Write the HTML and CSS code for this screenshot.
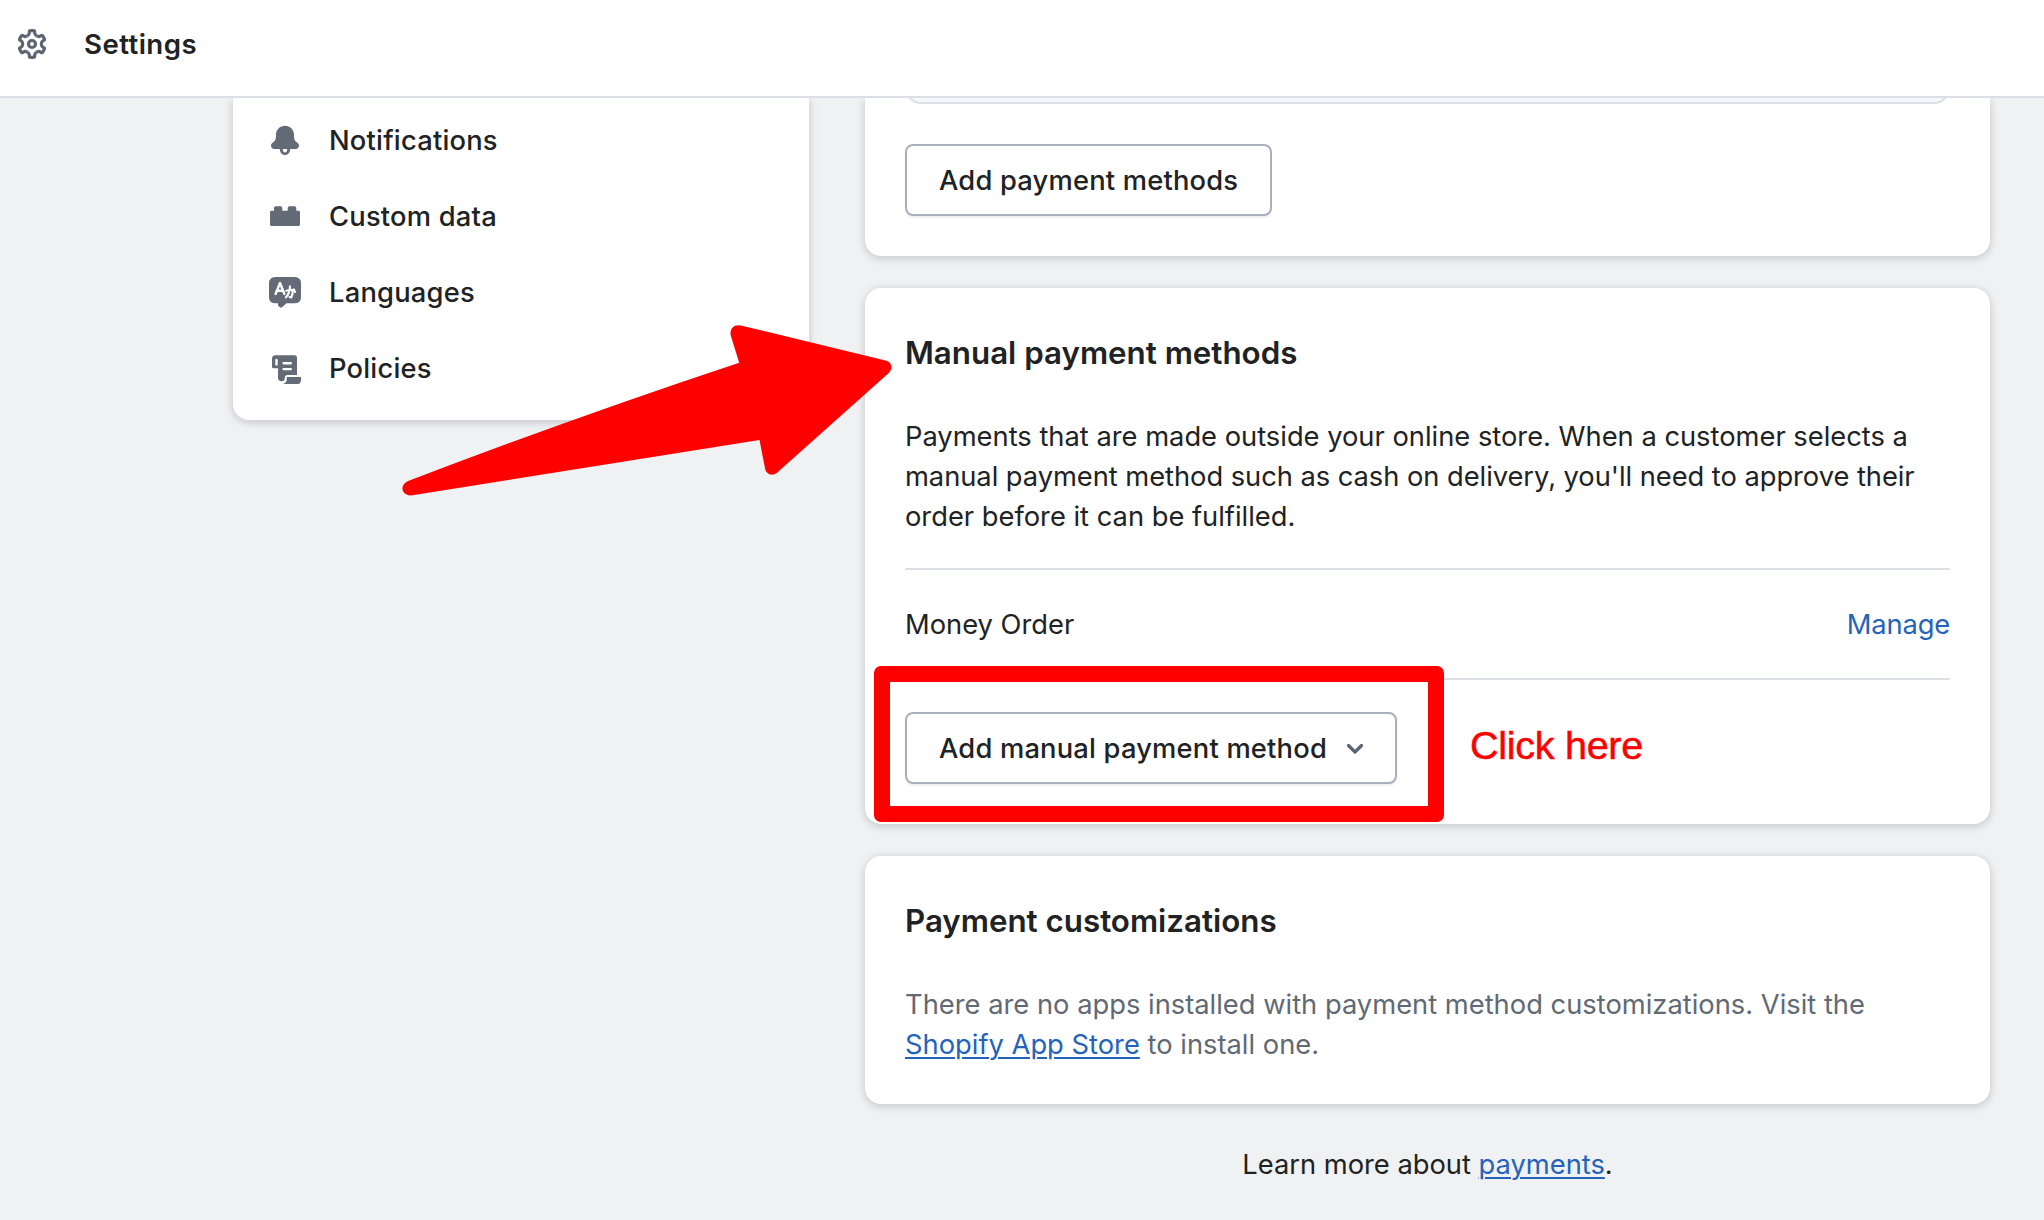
FILE: index.html
```html
<!DOCTYPE html>
<html lang="en">
<head>
<meta charset="utf-8">
<title>Settings</title>
<link rel="stylesheet" href="styles.css">
</head>
<body>
<header class="topbar">
  <svg class="gear" viewBox="-16 -16 32 32" width="32" height="32">
    <defs><path id="tooth" d="M-4.65-8.1C-3.4-8.85-2.7-9.8-2.7-11V-12Q-2.7-13.3-1.4-13.3H1.4Q2.7-13.3 2.7-12V-11C2.7-9.8 3.4-8.85 4.65-8.1"/></defs>
    <use href="#tooth"/><use href="#tooth" transform="rotate(60)"/><use href="#tooth" transform="rotate(120)"/>
    <use href="#tooth" transform="rotate(180)"/><use href="#tooth" transform="rotate(240)"/><use href="#tooth" transform="rotate(300)"/>
    <circle r="3.5"/>
  </svg>
  <h1 class="title">Settings</h1>
</header>
<main class="page">
  <nav class="sidebar">
    <a class="item">
      <svg class="icon" viewBox="0 0 40 40"><path fill-rule="evenodd" d="M20 5.7C15 5.7 11 9.6 11 14.6C11 19.5 10.3 21 8 22.5C6.5 23.5 6 24.4 6 25.8C6 27.8 7.5 29 9.2 29H14.8C14.8 32.4 17 35 20 35S25.2 32.4 25.2 29H30.8C32.5 29 34 27.8 34 25.8C34 24.4 33.5 23.5 32 22.5C29.7 21 29 19.5 29 14.6C29 9.6 25 5.7 20 5.7ZM17.7 29H22.3C22.3 31 21.4 32.4 20 32.4S17.7 31 17.7 29Z"/></svg>
      <span>Notifications</span>
    </a>
    <a class="item">
      <svg class="icon" viewBox="0 0 40 40"><path d="M5 16.2Q5 14.8 6.4 14.8H9V12Q9 10.3 10.7 10.3H15.6Q17.3 10.3 17.3 12V14.8H22.7V12Q22.7 10.3 24.4 10.3H29.6Q31.3 10.3 31.3 12V14.8H33.6Q35 14.8 35 16.2V28.6Q35 30 33.6 30H6.4Q5 30 5 28.6Z"/></svg>
      <span>Custom data</span>
    </a>
    <a class="item">
      <svg class="icon" viewBox="0 0 40 40"><path d="M10.5 5H29.5Q36 5 36 11.5V25Q36 31.3 29.5 31.3H21.6L17 35.2Q15.7 36.2 14.6 35.1L13 33.4V31.3H10.5Q4 31.3 4 25V11.5Q4 5 10.5 5Z"/><path class="knock" d="M10.6 22L15 11L19.4 22M12.2 18.7H17.8"/><path class="knock thin" d="M21.2 18.7L27.3 17.7C28 20 27.4 23.4 26.3 25.4L24.6 24.9M25 14.4C24.8 19 23.7 22.8 20.8 25.4M28.9 17.4L30 20"/></svg>
      <span>Languages</span>
    </a>
    <a class="item">
      <svg class="icon" viewBox="0 0 40 40"><path d="M10.5 7.3H29.5Q32 7.3 32 9.8V27H22.5Q19.8 27 19.8 29.5C19.8 32 19 33.3 16.7 33.3Q13 33.3 13 29.5V20.3H8.6Q7 20.3 7 18.7V10.8Q7 7.3 10.5 7.3Z"/><path d="M21.8 29H36V31.8Q36 36 32.5 36H18.3C20.8 35 21.8 33 21.8 31Z"/><path class="knock" d="M11.5 12V16.4M18.6 15.2H25.8M18.6 21.1H25.8"/></svg>
      <span>Policies</span>
    </a>
  </nav>
  <div class="content">
    <section class="card first">
      <div class="panel"></div>
      <button class="btn">Add payment methods</button>
    </section>
    <section class="card manual">
      <h2 class="heading">Manual payment methods</h2>
      <p class="text">Payments that are made outside your online store. When a customer selects a<br><span class="tight">manual payment method such as cash on delivery, you'll need to approve their</span><br>order before it can be fulfilled.</p>
      <div class="row"><span>Money Order</span><a class="link plain">Manage</a></div>
      <button class="btn">Add manual payment method
        <svg class="chevron" viewBox="0 0 20 14" width="20" height="14"><path d="M3.5 3.5L10 10L16.5 3.5"/></svg>
      </button>
      <div class="highlight"></div>
      <div class="callout">Click here</div>
    </section>
    <section class="card">
      <h2 class="heading">Payment customizations</h2>
      <p class="text muted">There are no apps installed with payment method customizations. Visit the<br><a class="link">Shopify App Store</a> to install one.</p>
    </section>
    <p class="footer">Learn more about <a class="link">payments</a>.</p>
  </div>
</main>
<svg class="arrow" viewBox="400 320 496 180" width="496" height="180"><path d="M408.8 480.8Q574 417.5 739.2 362.7L730.9 336C729 329 734 324 740.5 325.4L885.5 360.5C892 362 893.5 368.5 888.5 373.2L777 472.8C772.5 476.7 766 474.5 765 468.3L759.5 440L412.5 495.3C401.5 496.8 398.5 485 408.8 480.8Z"/></svg>
</body>
</html>
```
FILE: styles.css
```css
* { box-sizing: border-box; }
body {
  margin: 0;
  width: 2044px;
  height: 1220px;
  overflow: hidden;
  position: relative;
  background: #f0f1f3;
  color: #202223;
  font-family: Inter, "Liberation Sans", sans-serif;
  font-size: 27.3px;
  line-height: 40px;
}
h1, h2, p { margin: 0; }
.topbar {
  height: 98px;
  padding: 0 0 8px 16px;
  display: flex;
  align-items: center;
  gap: 36px;
  background: #fff;
  border-bottom: 2px solid #dcdfe5;
}
.gear { fill: none; stroke: #5c6672; stroke-width: 3.2; }
.title { font-size: 27.6px; line-height: 40px; font-weight: 600; letter-spacing: .45px; }
.page {
  height: 1122px;
  overflow: hidden;
  padding: 0 54px 0 233px;
  display: flex;
  align-items: flex-start;
  gap: 56px;
}
.sidebar {
  width: 576px;
  height: 322px;
  padding: 4px 32px;
  background: #fff;
  border-radius: 0 0 16px 16px;
  box-shadow: 0 0 10px rgba(23,24,40,.08), 0 3px 8px rgba(23,24,40,.13);
}
.item {
  height: 76px;
  display: flex;
  align-items: center;
  gap: 24px;
  font-weight: 500;
  letter-spacing: .22px;
}
.item span { padding-top: 1px; }
.icon { width: 40px; height: 40px; fill: #636b77; }
.knock { fill: none; stroke: #fff; stroke-width: 2.4; stroke-linecap: round; stroke-linejoin: round; }
.thin { stroke-width: 2.1; }
.content {
  width: 1125px;
  display: flex;
  flex-direction: column;
  gap: 32px;
}
.card {
  position: relative;
  padding: 40px;
  background: #fff;
  border-radius: 16px;
  box-shadow: 0 0 10px rgba(23,24,40,.08), 0 3px 8px rgba(23,24,40,.13);
}
.card.first { height: 158px; padding-top: 0; border-radius: 0 0 16px 16px; }
.panel {
  height: 6px;
  margin: 0 0 40px;
  overflow: hidden;
  display: flex;
  align-items: flex-end;
}
.panel::before {
  content: "";
  flex: 1;
  height: 40px;
  background: #f6f8fb;
  border: 2px solid #dce0e5;
  border-radius: 16px;
}
.btn {
  height: 72px;
  padding: 1px 30px 0 32px;
  display: inline-flex;
  align-items: center;
  font: inherit;
  font-weight: 500;
  letter-spacing: .2px;
  color: inherit;
  background: #fff;
  border: 2px solid #a9afbb;
  border-radius: 8px;
  box-shadow: 0 2px 2px rgba(0,0,0,.06);
  white-space: nowrap;
}
.first .btn { width: 367px; }
.manual { height: 536px; }
.manual .btn { width: 492px; }
.chevron { margin-left: auto; fill: none; stroke: #5c6672; stroke-width: 3.2; stroke-linecap: round; stroke-linejoin: round; }
.heading {
  padding-top: 1px;
  margin-bottom: 39px;
  font-size: 31.3px;
  line-height: 48px;
  font-weight: 600;
}
.text { padding-top: 1px; margin-bottom: -1px; white-space: nowrap; }
.tight { letter-spacing: -.04px; }
.row {
  height: 112px;
  margin: 32px 0;
  padding-top: 2px;
  display: flex;
  align-items: center;
  justify-content: space-between;
  border-top: 2px solid #dce0e5;
  border-bottom: 2px solid #dce0e5;
}
.link { color: #2463bc; text-decoration: underline; text-decoration-thickness: 2px; text-underline-offset: 3px; }
.plain { text-decoration: none; letter-spacing: -.15px; }
.muted { color: #616975; letter-spacing: .01px; }
.footer { margin-top: 9px; text-align: center; }
.highlight {
  position: absolute;
  left: 9px;
  top: 378px;
  width: 570px;
  height: 156px;
  border: 16px solid #f00;
  border-radius: 7px;
}
.callout {
  position: absolute;
  left: 605px;
  top: 433px;
  color: #f00;
  font: 39.6px/48px "Liberation Sans", Arial, sans-serif;
  letter-spacing: -.3px;
  -webkit-text-stroke: .5px #f00;
}
.arrow { position: absolute; left: 400px; top: 320px; fill: #f00; }
```
